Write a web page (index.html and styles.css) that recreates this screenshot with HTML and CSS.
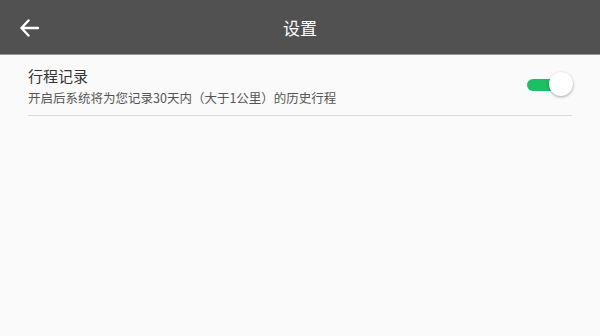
FILE: index.html
```html
<!DOCTYPE html>
<html lang="zh">
<head>
<meta charset="utf-8">
<link rel="stylesheet" href="styles.css">
</head>
<body>
<header class="bar">
  <button class="back" aria-label="返回">
    <svg width="20" height="20" viewBox="0 0 20 20"><path d="M19 10H2.5M9.5 2.5L2.5 10L9.5 17.5" fill="none" stroke="#fff" stroke-width="2.4" stroke-linecap="round" stroke-linejoin="round"/></svg>
  </button>
  <h1 class="title">设置</h1>
</header>
<main class="list">
  <div class="row">
    <div class="texts">
      <div class="name">行程记录</div>
      <div class="desc">开启后系统将为您记录30天内（大于1公里）的历史行程</div>
    </div>
    <div class="switch"><span class="track"></span><span class="thumb"></span></div>
  </div>
</main>
</body>
</html>
```
FILE: styles.css
```css
html, body { margin: 0; padding: 0; }
body {
  width: 600px; height: 336px; overflow: hidden;
  background: #fafafa;
  font-family: "Noto Sans CJK SC", "Noto Sans", sans-serif;
}
.bar {
  height: 54px;
  background: #515151;
  border-bottom: 1px solid #9a9a9a;
  display: flex; align-items: center; justify-content: center;
  position: relative;
}
.back {
  position: absolute; left: 19px; top: 18px;
  background: none; border: 0; padding: 0; width: 20px; height: 20px;
  display: flex;
}
.title {
  margin: 0; color: #fff; font-size: 17px; font-weight: 400;
}
.list { padding: 0 28px; }
.row {
  display: flex; align-items: center; justify-content: space-between;
  border-bottom: 1px solid #dcdcdc;
  height: 60px;
}
.texts { display: flex; flex-direction: column; gap: 3px; margin-top: 2px; }
.name { font-size: 15px; color: #333; line-height: 20px; }
.desc { font-size: 12.5px; color: #555; line-height: 17px; }
.switch { position: relative; width: 46px; height: 26px; margin-right: -1px; }
.track {
  position: absolute; left: 0; top: 7px; width: 34px; height: 12px;
  background: #1dbf65; border-radius: 6px;
}
.thumb {
  position: absolute; right: 0; top: 0; width: 24px; height: 24px;
  background: #fff; border-radius: 50%;
  box-shadow: 0 1px 3px rgba(0,0,0,0.35);
}
```
